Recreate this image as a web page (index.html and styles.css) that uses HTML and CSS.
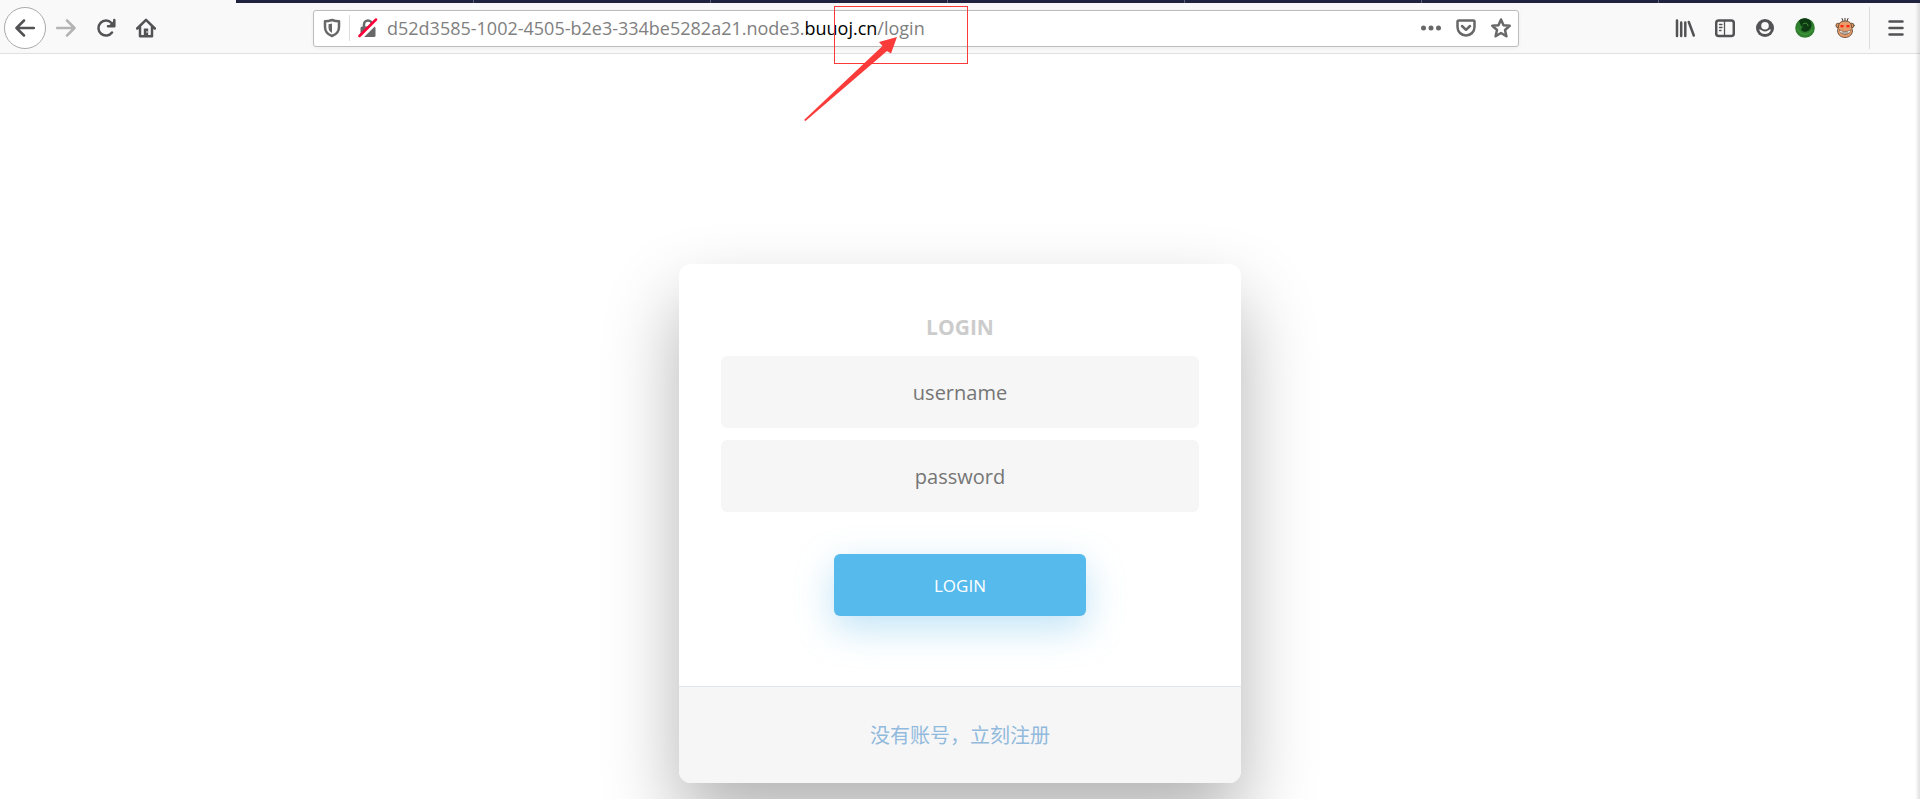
FILE: index.html
```html
<!DOCTYPE html>
<html lang="zh-CN">
<head>
<meta charset="utf-8">
<title>Login</title>
<link rel="stylesheet" href="styles.css">
</head>
<body>
<header class="chrome">
  <div class="tabs"><span class="tab active"></span><span class="tab first"></span><span class="tab"></span><span class="tab"></span><span class="tab"></span><span class="tab"></span><span class="tab"></span><span class="tab last"></span></div>
  <nav class="toolbar">
    <div class="group nav">
      <button class="tool back" aria-label="Back"><svg viewBox="0 0 20 20"><path d="M19 10H2M9 2.500L1.500 10L9 17.500"/></svg></button>
      <button class="tool off" aria-label="Forward"><svg viewBox="0 0 20 20"><path d="M1 10H18M11 2.500L18.500 10L11 17.500"/></svg></button>
      <button class="tool" aria-label="Reload"><svg viewBox="0 0 20 20"><path d="M16 14.500A7.500 7.500 0 1 1 15.500 5"/><path d="M18.300 2V8.300H12"/><path class="solid" d="M18.500 2V8.500H12z"/></svg></button>
      <button class="tool" aria-label="Home"><svg viewBox="0 0 20 20"><path d="M1.200 10.500L10 1.800L18.800 10.500M4 9V18.200H16V9"/><path class="solid" d="M7.800 18V10.500h4.400V18z"/><circle cx="11" cy="14" r=".8" fill="#fff" stroke="none"/></svg></button>
    </div>
    <div class="urlbar">
      <button class="tool small" aria-label="Tracking protection"><svg viewBox="0 0 20 20"><path d="M10 2C7.500 2.900 5 3.300 3 3.300V9c0 4.500 2.300 7.300 7 9c4.700-1.700 7-4.500 7-9V3.300C15 3.300 12.500 2.900 10 2z"/><path class="solid" d="M10 5.500L6.500 6.300V9.500c0 2.500 1 4 3.500 5.500z"/></svg></button>
      <span class="rule"></span>
      <button class="tool small" aria-label="Connection not secure"><svg viewBox="0 0 20 20"><path d="M6 9V6.500a4 4 0 0 1 8 0V9"/><rect class="solid" x="2.500" y="8.500" width="15" height="10.500" rx="1.500"/><path stroke="#fff" stroke-width="4.500" d="M2.500 19.500L19.500 2.500"/><path stroke="#ff0039" d="M1.500 18L18 1.500"/></svg></button>
      <a class="url" href="#">d52d3585-1002-4505-b2e3-334be5282a21.node3.<b>buuoj.cn</b>/login</a>
      <div class="actions">
        <button class="tool small" aria-label="Page actions"><svg viewBox="0 0 20 20"><g class="solid"><circle cx="2.500" cy="10" r="2.500"/><circle cx="10" cy="10" r="2.500"/><circle cx="17.500" cy="10" r="2.500"/></g></svg></button>
        <button class="tool small" aria-label="Save to Pocket"><svg viewBox="0 0 20 20"><path d="M2.500 2.500H17.500a1 1 0 0 1 1 1V9a8.500 8.500 0 0 1-17 0V3.500a1 1 0 0 1 1-1z"/><path d="M6 8L10 11.800L14 8"/></svg></button>
        <button class="tool small" aria-label="Bookmark"><svg viewBox="0 0 20 20"><path d="M10 1.500L12.500 7.200L18.700 7.800L14 12L15.400 18.300L10 15L4.600 18.300L6 12L1.300 7.800L7.500 7.200z"/></svg></button>
      </div>
    </div>
    <div class="group extras">
      <button class="tool" aria-label="Library"><svg viewBox="0 0 20 20"><path d="M2 2.500V18M6.200 4.500V18M10.300 4.500V18M13.800 4L18.800 17.500"/></svg></button>
      <button class="tool" aria-label="Sidebars"><svg viewBox="0 0 20 20"><rect x="1.200" y="2.500" width="17.600" height="15.500" rx="2.500"/><path stroke-width="1.300" d="M9.500 3V18M4.500 6.500H7M4.500 9.500H7M4.500 12.500H6"/></svg></button>
      <button class="tool" aria-label="Account"><svg viewBox="0 0 20 20"><circle class="solid" cx="10" cy="10" r="9"/><circle cx="10" cy="7.800" r="3.800" fill="#f9f9fa" stroke="none"/><path fill="#f9f9fa" stroke="none" d="M4 11.500C5.500 11.500 6.300 12 7 12.600C9 13.900 11 13.900 13 12.600C13.700 12 14.500 11.500 16 11.500C15 14.500 13 16 10 16S5 14.500 4 11.500z"/></svg></button>
      <button class="tool" aria-label="Green fox"><svg viewBox="0 0 20 20"><circle cx="10" cy="10" r="9.800" fill="#2f7f2f" stroke="none"/><path d="M4 2.500C8-1 14 0 16 4C18 10 13 15 8 13.500C5 12 6 9.500 9 9C5 8.500 5 5 4 2.500z" fill="#0d3a12" stroke="none"/><path d="M8 6C10 4.500 13 5 13 7.500M2.500 11C4 17 13 19 17.500 12" stroke="#45a03c" stroke-width="1"/></svg></button>
      <button class="tool" aria-label="Monkey"><svg viewBox="0 0 20 20"><path d="M8 3L7 .5M10 3V0M12 3L13 .5" stroke="#443329" stroke-width="1"/><g stroke="#56402f" stroke-width=".8"><circle cx="3.200" cy="7.500" r="2.300" fill="#e0945f"/><circle cx="16.800" cy="7.500" r="2.300" fill="#e0945f"/><path fill="#e89c69" d="M4 6C5 2 15 2 16 6L17.500 13C17 18 13 19.500 10 19.500S3 18 2.500 13z"/><path fill="#fff" stroke-width=".5" d="M4.500 12C8 14 12 14 15.500 12C15.500 18 4.500 18 4.500 12zM6 15H14M8 13.500V16M10 13.500V17M12 13.500V16"/></g><rect x="5.500" y="7" width="3" height="2.300" fill="#f21" stroke="none"/><rect x="11.500" y="7" width="3" height="2.300" fill="#f21" stroke="none"/></svg></button>
      <span class="rule tall"></span>
      <button class="tool" aria-label="Menu"><svg viewBox="0 0 20 20"><path d="M3.500 3.500H16.500M3.500 10H16.500M3.500 16.500H16.500"/></svg></button>
    </div>
  </nav>
</header>
<svg class="note" width="170" height="120" viewBox="0 0 170 120" aria-hidden="true"><rect x="30.500" y=".5" width="133" height="57" fill="none" stroke="#fb3a3a"/><path fill="#fb3a3a" d="M0 114L78.500 40L75 36L93 31L87 47.500L83 45L1.500 115z"/></svg>
<main class="page">
  <form class="card">
    <h2 class="title">LOGIN</h2>
    <input class="field" type="text" placeholder="username" aria-label="username">
    <input class="field" type="password" placeholder="password" aria-label="password">
    <button class="submit" type="button">LOGIN</button>
    <footer class="foot"><a href="#">没有账号，立刻注册</a></footer>
  </form>
</main>
</body>
</html>
```
FILE: styles.css
```css
* { box-sizing: border-box; }
body { position: relative; display: flex; flex-direction: column; min-height: 100vh; margin: 0; background: #fff; font-family: "Open Sans", "Noto Sans CJK SC", sans-serif; }
body::after { content: ""; position: absolute; top: 3px; right: 0; bottom: 0; width: 5px; background: linear-gradient(to right, rgba(0, 0, 0, 0), rgba(0, 0, 0, .12)); }
button { font: inherit; border: 0; background: none; padding: 0; }
.chrome { background: #f9f9fa; border-bottom: 1px solid #e0e0e1; }
.tabs { display: flex; height: 3px; }
.tab { flex: 0 0 237px; background: #202340; border-left: 1px solid #5c5e74; }
.tab.active { flex-basis: 236px; background: #f9f9fa; border: 0; }
.tab.first { border: 0; }
.tab.last { flex: 1; }
.toolbar { display: flex; align-items: center; height: 50px; }
.group { display: flex; align-items: center; }
.nav { width: 313px; padding-left: 4px; }
.tool { display: grid; place-items: center; flex: none; width: 40px; height: 40px; color: #535355; }
.tool svg { width: 20px; height: 20px; fill: none; stroke: currentColor; stroke-width: 2.5; stroke-linecap: round; stroke-linejoin: round; }
.tool .solid { fill: currentColor; stroke: none; }
.back { width: 42px; height: 42px; border: 1px solid #aaa; border-radius: 50%; background: #fff; }
.off { color: #b4b4b5; }
.urlbar { flex: 1; display: flex; align-items: center; height: 37px; background: #fff; border: 1px solid #bcbcbd; border-radius: 3px; box-shadow: 0 1px 4px rgba(0, 0, 0, .05); }
.small { width: 35px; height: 35px; color: #686869; }
.rule { width: 1px; height: 26px; background: #dcdcdd; }
.tall { height: 42px; margin: 0 6px 0 4px; }
.url { flex: 1; padding-left: 2px; font-size: 18px; line-height: 24px; color: #808080; text-decoration: none; white-space: nowrap; }
.url b { font-weight: 400; color: #000; }
.actions { display: flex; }
.extras { padding-left: 146px; padding-right: 4px; }
.note { position: absolute; left: 804px; top: 6px; pointer-events: none; }
.page { flex: 1; display: flex; justify-content: center; align-items: flex-start; padding: 210px 0 16px; overflow: hidden; }
.card { width: 562px; display: flex; flex-direction: column; align-items: center; background: #fff; border-radius: 12px; box-shadow: 0 37px 75px rgba(0, 0, 0, .3); }
.title { margin: 49px 0 15px; font-size: 21px; line-height: 28px; font-weight: 700; color: #ccc; }
.field { width: 478px; height: 72px; margin-bottom: 12px; border: 0; border-radius: 6px; background: #f6f6f6; font: inherit; font-size: 20px; text-align: center; color: #0d0d0d; }
.field::placeholder { color: #757575; opacity: 1; }
.submit { width: 252px; height: 62px; margin: 30px 0 70px; border-radius: 6px; background: #56baed; color: #fff; font-size: 17px; box-shadow: 0 12px 37px rgba(95, 186, 233, .4); }
.foot { align-self: stretch; padding: 34px 0 33px; border-top: 1px solid #dce8f1; border-radius: 0 0 12px 12px; background: #f6f6f6; text-align: center; font-size: 20px; line-height: 28px; }
.foot a { color: #92badd; text-decoration: none; font-family: "Noto Sans CJK SC", sans-serif; }
```
